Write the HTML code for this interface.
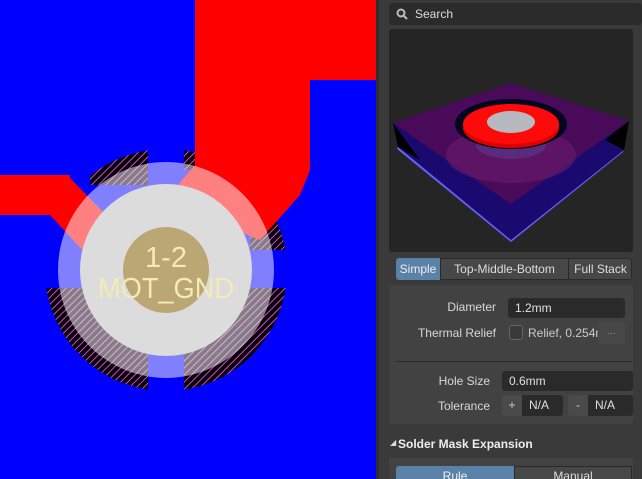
<!DOCTYPE html>
<html><head><meta charset="utf-8"><style>
*{margin:0;padding:0;box-sizing:border-box}
html,body{width:642px;height:479px;overflow:hidden}
body{background:#3a3a3a;font-family:"Liberation Sans","DejaVu Sans",sans-serif;position:relative}
.a{position:absolute}
.lbl{position:absolute;color:#d8d8d8;font-size:12px;text-align:right}
.inp{position:absolute;background:#2a2a2a;border-radius:3px;color:#e0e0e0;font-size:12px;padding-left:7px;line-height:20px}
</style></head><body>
<svg class="a" style="left:0;top:0" width="376" height="479" viewBox="0 0 376 479">
<defs>
<pattern id="h" width="5" height="5" patternUnits="userSpaceOnUse" patternTransform="rotate(45)">
<rect width="5" height="5" fill="#000"/><rect width="1" height="5" fill="#e040e0"/></pattern>
<mask id="m">
<rect x="0" y="288" width="376" height="191" fill="#fff"/>
<rect x="90" y="140" width="58" height="45" fill="#fff"/>
<rect x="184" y="140" width="20" height="30" fill="#fff"/>
<rect x="250" y="215" width="60" height="35" fill="#fff"/>
<rect x="148" y="0" width="36" height="479" fill="#000"/>
</mask>
</defs>
<rect width="376" height="479" fill="#0000ff"/>
<circle cx="166" cy="270" r="121" fill="url(#h)" mask="url(#m)"/>
<rect x="0" y="175" width="70" height="40" fill="#f00"/>
<polygon points="55,175 70,178 140,250 110,280 50,215" fill="#f00"/>
<polygon points="195,0 376,0 376,80 310,80 310,170 300,195 260,240 165,200 195,165" fill="#f00"/>
<circle cx="166" cy="270" r="108" fill="#fff" fill-opacity="0.5"/>
<circle cx="166" cy="270" r="86" fill="#dcdcdc"/>
<circle cx="166" cy="270" r="43" fill="#bba774"/>
<text x="166" y="267" font-size="29" fill="#f4eab8" text-anchor="middle" font-family="Liberation Sans">1-2</text>
<text x="166" y="298" font-size="29" fill="#f4eab8" text-anchor="middle" font-family="Liberation Sans" textLength="136" lengthAdjust="spacingAndGlyphs">MOT_GND</text>
</svg>
<div class="a" style="left:376px;top:0;width:3px;height:479px;background:#2e2e2e"></div>
<div class="a" style="left:389px;top:3px;width:253px;height:22px;background:#2b2b2b;border-radius:3px"></div>
<svg class="a" style="left:396px;top:8px" width="12" height="12"><circle cx="5" cy="5" r="3.5" fill="none" stroke="#bbb" stroke-width="2"/><line x1="7.5" y1="7.5" x2="11" y2="11" stroke="#bbb" stroke-width="2"/></svg>
<div class="a" style="left:415px;top:7px;color:#ddd;font-size:12px">Search</div>
<svg class="a" style="left:389px;top:29px" width="244" height="223" viewBox="389 29 244 223">
<rect x="389" y="29" width="244" height="223" fill="#252525" rx="3"/>
<polygon points="393,123 511,83 629,121 511,204" fill="#4a0a5a"/>
<polygon points="393,123 511,204 511,240 398,147" fill="#1a0a70"/>
<polygon points="629,121 511,204 511,240 624,150" fill="#1a0a70"/>
<polygon points="393,123 398,147 420,160" fill="#000"/>
<polygon points="629,121 624,150 605,140" fill="#000"/>
<polygon points="398,147 511,240 624,150 623,152 511,242 397,149" fill="#6060ff"/>
<ellipse cx="511" cy="155" rx="65" ry="28" fill="#6a1a6a" opacity="0.6"/>
<ellipse cx="511" cy="145" rx="35" ry="14" fill="#5a3a8a" opacity="0.6"/>
<ellipse cx="511" cy="124" rx="56" ry="25" fill="#050520"/>
<ellipse cx="511" cy="128" rx="48" ry="20" fill="#e00000"/>
<ellipse cx="511" cy="124" rx="48" ry="20" fill="#ff0a0a"/>
<ellipse cx="511" cy="122" rx="24" ry="11" fill="#b8b8c0"/>
</svg>
<div class="a" style="left:396px;top:258px;width:236px;height:22px;border:1px solid #2a2a2a;border-radius:3px;background:#474747"></div>
<div class="a" style="left:396px;top:258px;width:44px;height:22px;background:#5a82a8;border-radius:3px 0 0 3px;color:#eee;font-size:12px;text-align:center;line-height:22px">Simple</div>
<div class="a" style="left:440px;top:258px;width:129px;height:22px;border-left:1px solid #2a2a2a;border-right:1px solid #2a2a2a;color:#ddd;font-size:12px;text-align:center;line-height:22px">Top-Middle-Bottom</div>
<div class="a" style="left:569px;top:258px;width:63px;height:22px;color:#ddd;font-size:12px;text-align:center;line-height:22px">Full Stack</div>
<div class="a" style="left:389px;top:285px;width:244px;height:139px;background:#424242;border-radius:3px"></div>
<div class="lbl" style="left:390px;top:300px;width:106px">Diameter</div>
<div class="inp" style="left:508px;top:298px;width:117px">1.2mm</div>
<div class="lbl" style="left:390px;top:326px;width:106px">Thermal Relief</div>
<div class="a" style="left:509px;top:325px;width:14px;height:15px;border:1px solid #666;border-radius:3px;background:#3a3a3a"></div>
<div class="a" style="left:528px;top:326px;color:#ccc;font-size:12px;width:70px;overflow:hidden;white-space:nowrap">Relief, 0.254mm</div>
<div class="a" style="left:598px;top:322px;width:27px;height:22px;background:#474747;border-radius:2px;color:#888;font-size:10px;text-align:center;line-height:20px">...</div>
<div class="a" style="left:395px;top:361px;width:237px;height:1px;background:#2a2a2a"></div>
<div class="lbl" style="left:390px;top:374px;width:100px">Hole Size</div>
<div class="inp" style="left:502px;top:371px;width:131px">0.6mm</div>
<div class="lbl" style="left:390px;top:399px;width:100px">Tolerance</div>
<div class="a" style="left:502px;top:395px;width:20px;height:21px;background:#4a4a4a;color:#ccc;font-size:12px;text-align:center;line-height:21px;border-radius:3px 0 0 3px">+</div>
<div class="inp" style="left:522px;top:395px;width:41px;height:21px;border-radius:0 3px 3px 0">N/A</div>
<div class="a" style="left:568px;top:395px;width:20px;height:21px;background:#4a4a4a;color:#ccc;font-size:12px;text-align:center;line-height:21px;border-radius:3px 0 0 3px">-</div>
<div class="inp" style="left:588px;top:395px;width:45px;height:21px;border-radius:0 3px 3px 0">N/A</div>
<div class="a" style="left:390px;top:438px;color:#ddd;font-size:8px">◢</div>
<div class="a" style="left:398px;top:437px;color:#eee;font-size:12px;font-weight:bold">Solder Mask Expansion</div>
<div class="a" style="left:389px;top:458px;width:244px;height:21px;background:#424242"></div>
<div class="a" style="left:396px;top:466px;width:118px;height:20px;background:#5a82a8;border-radius:3px 0 0 0;color:#eee;font-size:12px;text-align:center;line-height:20px">Rule</div>
<div class="a" style="left:514px;top:466px;width:118px;height:20px;background:#474747;border:1px solid #2a2a2a;color:#ddd;font-size:12px;text-align:center;line-height:18px">Manual</div>
</body></html>
